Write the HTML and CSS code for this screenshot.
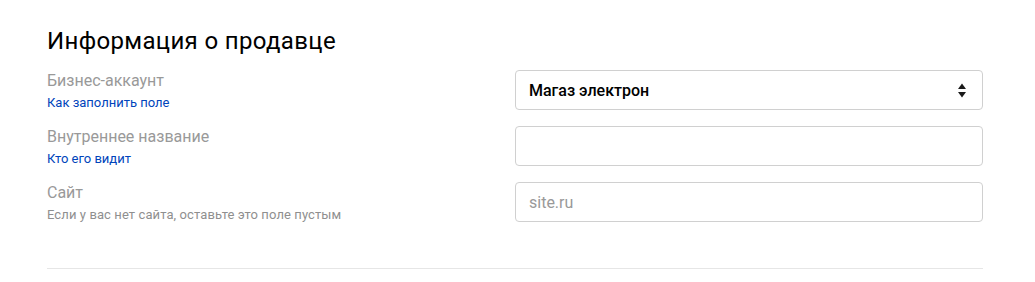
FILE: index.html
```html
<!DOCTYPE html>
<html lang="ru">
<head>
<meta charset="utf-8">
<link rel="stylesheet" href="styles.css">
</head>
<body>
<section class="section">
  <h2 class="title">Информация о продавце</h2>
  <div class="rows">
    <div class="row">
      <div class="label-col">
        <div class="label">Бизнес-аккаунт</div>
        <a class="link" href="#">Как заполнить поле</a>
      </div>
      <div class="field select">
        <span class="value">Магаз электрон</span>
        <svg class="arrows" width="10" height="16" viewBox="0 0 10 16"><path d="M1 7L5 1.5L9 7Z" fill="#1a1a1a"/><path d="M1 10L5 15.5L9 10Z" fill="#1a1a1a"/></svg>
      </div>
    </div>
    <div class="row">
      <div class="label-col">
        <div class="label">Внутреннее название</div>
        <a class="link" href="#">Кто его видит</a>
      </div>
      <div class="field"></div>
    </div>
    <div class="row">
      <div class="label-col">
        <div class="label">Сайт</div>
        <div class="hint">Если у вас нет сайта, оставьте это поле пустым</div>
      </div>
      <div class="field"><span class="placeholder">site.ru</span></div>
    </div>
  </div>
  <div class="divider"></div>
</section>
</body>
</html>
```
FILE: styles.css
```css
html, body {
  margin: 0;
  padding: 0;
  background: #fff;
}
body {
  font-family: Roboto, "Noto Sans", Arial, sans-serif;
  color: #000;
}
.section {
  width: 936px;
  padding: 27px 0 0 47px;
}
.title {
  margin: 0;
  font-size: 24px;
  font-weight: 400;
  line-height: 28px;
  letter-spacing: 0.35px;
  color: #000;
}
.rows {
  margin-top: 15px;
  display: flex;
  flex-direction: column;
  gap: 16px;
}
.row {
  display: grid;
  grid-template-columns: 468px 468px;
  grid-template-rows: 40px;
  align-items: start;
}
.label-col {
  display: flex;
  flex-direction: column;
  padding-top: 1px;
}
.label {
  font-size: 16px;
  line-height: 20px;
  color: #999;
}
.link, .hint {
  font-size: 13px;
  line-height: 18px;
  margin-top: 3px;
}
.link {
  color: #04b;
  text-decoration: none;
}
.hint {
  color: #8f8f8f;
  letter-spacing: 0.1px;
}
.field {
  box-sizing: border-box;
  height: 40px;
  border: 1px solid #d0d0d0;
  border-radius: 4px;
  display: flex;
  align-items: center;
  padding: 0 13px;
  font-size: 16px;
}
.select {
  justify-content: space-between;
  padding-right: 15px;
}
.value {
  color: #000;
  font-weight: 500;
}
.placeholder {
  color: #999;
}
.arrows {
  display: block;
}
.divider {
  margin-top: 46px;
  height: 1px;
  background: #e6e6e6;
}
```
